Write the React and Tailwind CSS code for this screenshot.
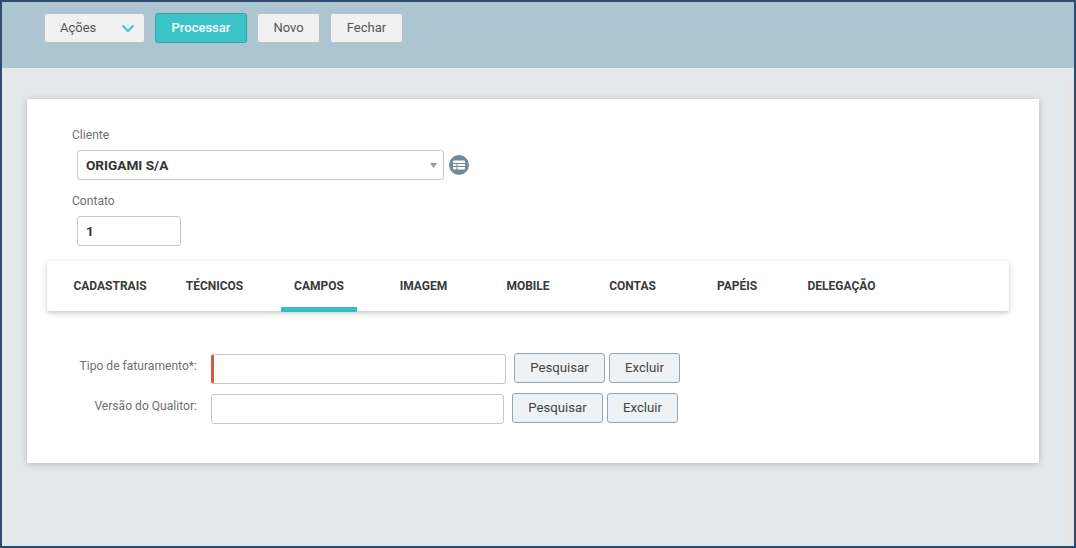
import React from "react";

const toolBtn = "h-[30px] rounded-[3px] border border-[#b4c3ce] bg-[#f1f1f1] text-[13px] text-[#555] flex items-center";
const formBtn = "h-[30px] -mt-[2px] rounded-[3px] border border-[#8fa6b5] bg-[#eff2f4] text-[13.2px] text-[#444] flex items-center justify-center";
const tabs = [
  { label: "CADASTRAIS" },
  { label: "TÉCNICOS" },
  { label: "CAMPOS", active: true },
  { label: "IMAGEM" },
  { label: "MOBILE" },
  { label: "CONTAS" },
  { label: "PAPÉIS" },
  { label: "DELEGAÇÃO" },
];

export default function App() {
  return (
    <div className="w-[1076px] h-[548px] border-2 border-[#2e4a6e] bg-[#e3e8eb] overflow-hidden font-['Roboto',sans-serif] flex flex-col">
      <div className="h-[66px] shrink-0 bg-[#adc4d1] pt-[11px] pl-[42px] flex items-start gap-[10px]">
        <div className={`${toolBtn} w-[101px] justify-between pl-[15px] pr-[9px]`}>
          <span className="-mt-[1px]">Ações</span>
          <svg width="14" height="9" viewBox="0 0 14 9" fill="none" stroke="#3cc3c8" strokeWidth="2"><path d="M1.5 1.5 7 7l5.5-5.5" /></svg>
        </div>
        <div className="h-[30px] w-[92px] rounded-[3px] border border-[#2fa3a8] bg-[#3bc3c7] text-white text-[13px] font-medium flex items-center justify-center">Processar</div>
        <div className={`${toolBtn} w-[63px] justify-center`}>Novo</div>
        <div className={`${toolBtn} w-[73px] justify-center`}>Fechar</div>
      </div>

      <div className="flex-1 flex">
        <div className="flex-1 pt-[31px] pl-[25px]">
          <div className="w-[1012px] h-[364px] bg-white shadow-[0_1px_6px_rgba(0,0,0,0.22)] pt-[28px]">
            <div className="pl-[45px] text-[12.1px] leading-[16px] text-[#707070]">Cliente</div>
            <div className="mt-[7px] ml-[50px] flex items-center gap-[5px]">
              <div className="w-[367px] h-[30px] rounded-[3px] border border-[#c8c8c8] flex items-center justify-between pl-[8px] pr-[6px]">
                <span className="text-[13.6px] font-bold text-[#333]">ORIGAMI S/A</span>
                <svg width="7" height="5" viewBox="0 0 7 5"><path d="M0 0h7L3.5 5z" fill="#999" /></svg>
              </div>
              <svg width="20" height="20" viewBox="0 0 20 20">
                <circle cx="10" cy="10" r="10" fill="#74899a" />
                <path d="M4 6.5a1 1 0 0 1 1-1h10a1 1 0 0 1 1 1v1.5H4zM4 9h3.5v2H4zM8.5 9H16v2H8.5zM4 12h3.5v2.5H5a1 1 0 0 1-1-1zM8.5 12H16v1.5a1 1 0 0 1-1 1H8.5z" fill="#fff" />
              </svg>
            </div>
            <div className="mt-[13px] pl-[45px] text-[12.1px] leading-[16px] text-[#707070]">Contato</div>
            <div className="mt-[7px] ml-[50px] w-[104px] h-[30px] rounded-[3px] border border-[#c8c8c8] flex items-center pl-[8px] text-[13.6px] font-bold text-[#333]">1</div>

            <div className="mt-[15px] ml-[20px] w-[962px] h-[50px] bg-white shadow-[0_2px_5px_rgba(0,0,0,0.22)] flex items-start gap-[28.5px] pl-[25px]">
              {tabs.map((t) => (
                <div
                  key={t.label}
                  className={`w-[76px] shrink-0 h-[51px] pt-[4px] flex items-center justify-center text-[12px] font-bold text-[#3a3a3a] whitespace-nowrap border-b-[5px] ${t.active ? "border-[#38bdc0]" : "border-transparent"}`}
                >
                  {t.label}
                </div>
              ))}
            </div>

            <div className="mt-[43px] flex items-center">
              <div className="w-[170px] -mt-[6px] text-right text-[12.1px] text-[#707070]">Tipo de faturamento*:</div>
              <div className="ml-[14px] w-[295px] h-[30px] rounded-[3px] border border-[#c8c8c8] border-l-[3px] border-l-[#cf5c3c]" />
              <div className={`${formBtn} ml-[8px] w-[91px]`}>Pesquisar</div>
              <div className={`${formBtn} ml-[4px] w-[71px]`}>Excluir</div>
            </div>
            <div className="mt-[10px] flex items-center">
              <div className="w-[170px] -mt-[6px] text-right text-[12.1px] text-[#707070]">Versão do Qualitor:</div>
              <div className="ml-[14px] w-[293px] h-[30px] rounded-[3px] border border-[#c8c8c8]" />
              <div className={`${formBtn} ml-[8px] w-[91px]`}>Pesquisar</div>
              <div className={`${formBtn} ml-[4px] w-[71px]`}>Excluir</div>
            </div>
          </div>
        </div>
        <div className="w-[10px] mt-[13px] bg-[#e4e4e4]" />
      </div>
    </div>
  );
}
